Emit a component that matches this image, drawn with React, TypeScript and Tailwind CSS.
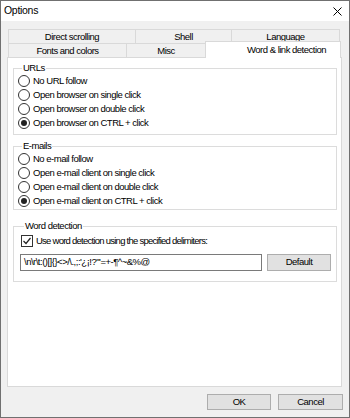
import React from "react";

const Radio = ({ label, checked }: { label: string; checked?: boolean }) => (
  <div className="flex items-center h-[14px] gap-[3px]">
    <span className="flex items-center justify-center w-[12px] h-[12px] rounded-full border border-[#333333] bg-white">
      {checked && <span className="w-[6px] h-[6px] rounded-full bg-[#222222]" />}
    </span>
    <span>{label}</span>
  </div>
);

const Tab = ({ label, w }: { label: string; w: string }) => (
  <div
    className={`${w} h-[14px] flex items-center justify-center border-t border-l border-r border-[#d9d9d9] bg-[#f0f0f0] -mr-[1px] leading-none`}
  >
    {label}
  </div>
);

const App = () => {
  return (
    <div className="w-[350px] h-[418px] flex flex-col bg-[#f0f0f0] border border-[#707070] font-['Liberation_Sans',sans-serif] text-[9.5px] tracking-[-0.5px] text-black">
      {/* title bar */}
      <div className="h-[20px] bg-white flex items-center justify-between pl-[3px] pr-[7px]">
        <span className="text-[10.5px] tracking-[-0.3px]">Options</span>
        <svg width="9" height="9" viewBox="0 0 9 9" className="text-black">
          <path d="M0.5 0.5L8.5 8.5M8.5 0.5L0.5 8.5" stroke="currentColor" strokeWidth="1" />
        </svg>
      </div>

      <div className="pt-[8px]">
        {/* back row of tabs */}
        <div className="flex ml-[7px]">
          <Tab label="Direct scrolling" w="w-[128px]" />
          <Tab label="Shell" w="w-[97px]" />
          <Tab label="Language" w="w-[109px]" />
        </div>
        {/* front row */}
        <div className="flex items-end h-[14px] ml-[7px] relative z-10">
          <Tab label="Fonts and colors" w="w-[119px]" />
          <Tab label="Misc" w="w-[80px]" />
          <div className="w-[136px] h-[17px] -mb-[1px] bg-white border-t border-l border-r border-[#d9d9d9] pl-[41px] pt-[3px] leading-[10px] whitespace-nowrap">
            Word &amp; link detection
          </div>
        </div>

        {/* panel */}
        <div className="ml-[6px] w-[335px] h-[330px] bg-white border border-[#d9d9d9] pl-[5px]">
          <fieldset className="mt-[4px] w-[324px] border border-[#dcdcdc] pl-[4px] pb-[4px]">
            <legend className="ml-[4px] px-[1px] leading-[12px]">URLs</legend>
            <Radio label="No URL follow" />
            <Radio label="Open browser on single click" />
            <Radio label="Open browser on double click" />
            <Radio label="Open browser on CTRL + click" checked />
          </fieldset>

          <fieldset className="mt-[5px] w-[324px] border border-[#dcdcdc] pl-[4px] pb-[1px]">
            <legend className="ml-[4px] px-[1px] leading-[12px]">E-mails</legend>
            <Radio label="No e-mail follow" />
            <Radio label="Open e-mail client on single click" />
            <Radio label="Open e-mail client on double click" />
            <Radio label="Open e-mail client on CTRL + click" checked />
          </fieldset>

          <fieldset className="mt-[10px] w-[324px] border border-[#dcdcdc] pl-[6px] pb-[10px]">
            <legend className="ml-[4px] px-[1px] leading-[12px]">Word detection</legend>
            <div className="flex items-center h-[18px] gap-[3px] pl-[1px]">
              <span className="w-[12px] h-[12px] border border-[#333333] bg-white flex items-center justify-center">
                <svg width="10" height="10" viewBox="0 0 10 10">
                  <path d="M1.5 5L4 7.5L8.5 2" fill="none" stroke="#222222" strokeWidth="1.2" />
                </svg>
              </span>
              <span className="tracking-[-0.75px]">Use word detection using the specified delimiters:</span>
            </div>
            <div className="flex gap-[5px] mt-[4px]">
              <div className="w-[242px] h-[17px] border border-[#7a7a7a] bg-white pl-[3px] flex items-center whitespace-nowrap overflow-hidden">
                {"\\n\\r\\t:()[]{}<>/\\.,;:'¿¡!?\"'=+-¶^~&%@"}
              </div>
              <button className="w-[64px] h-[17px] bg-[#e1e1e1] border border-[#adadad] flex items-center justify-center">
                Default
              </button>
            </div>
          </fieldset>
        </div>

        {/* dialog buttons */}
        <div className="flex justify-end gap-[7px] pt-[7px] pr-[6px]">
          <button className="w-[64px] h-[16px] bg-[#e1e1e1] border border-[#adadad] flex items-center justify-center">
            OK
          </button>
          <button className="w-[65px] h-[16px] bg-[#e1e1e1] border border-[#adadad] flex items-center justify-center">
            Cancel
          </button>
        </div>
      </div>
    </div>
  );
};

export default App;
